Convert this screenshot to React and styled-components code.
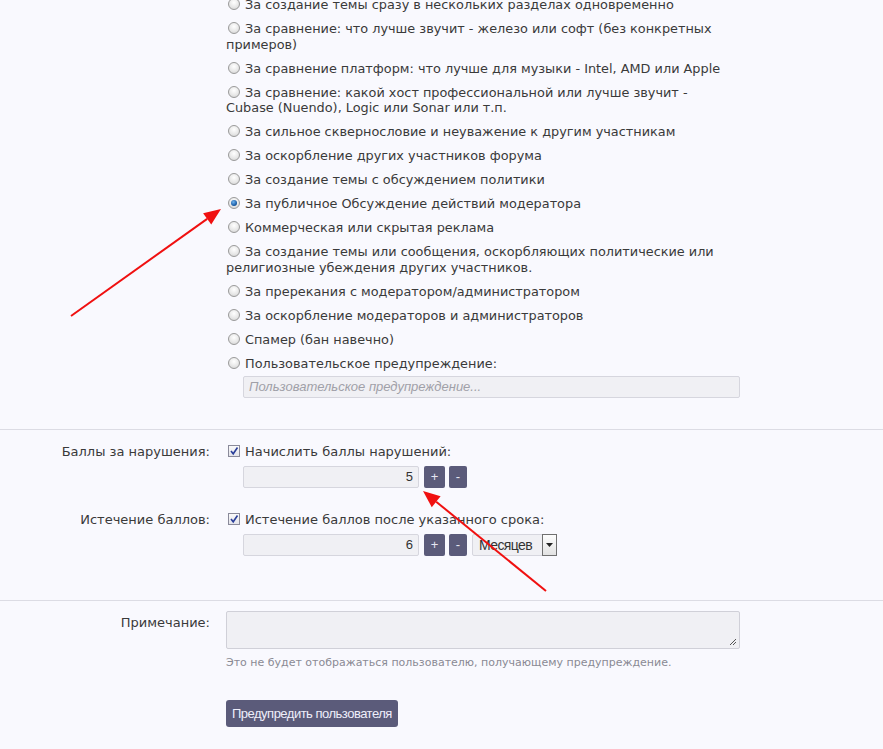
import React from 'react';
import styled, { createGlobalStyle } from 'styled-components';

const GlobalStyle = createGlobalStyle`
  html, body {
    margin: 0;
    padding: 0;
    background: #f9f9fe;
  }
  body {
    font-family: "DejaVu Sans", Verdana, sans-serif;
    font-size: 13px;
    color: #3a3a3a;
  }
`;

const Page = styled.div`
  position: relative;
  width: 883px;
  height: 749px;
  overflow: hidden;
`;

const Section = styled.div`
  padding: ${p => p.$pad || '0'};
  border-bottom: ${p => (p.$divider ? '1px solid #dcdce4' : 'none')};
`;

const Row = styled.div`
  display: grid;
  grid-template-columns: 210px 514px;
  column-gap: 16px;
  margin-bottom: ${p => p.$gap || '0'};
`;

const Label = styled.div`
  text-align: right;
  line-height: 16px;
  padding-top: ${p => p.$top || '0'};
  color: #3a3a3a;
`;

const Controls = styled.div`
  line-height: 16px;
`;

const OptionList = styled.div`
  margin-top: -3px;
`;

const Option = styled.div`
  max-width: 498px;
  font-size: 12.85px;
  line-height: 15.5px;
  margin-bottom: 8.5px;
`;

const Radio = styled.span`
  display: inline-block;
  box-sizing: border-box;
  width: 12px;
  height: 12px;
  margin: 0 5px 0 2px;
  vertical-align: -1px;
  border-radius: 50%;
  border: 1px solid #9a9a9a;
  background: radial-gradient(circle at 50% 35%, #ffffff 0%, #e8e8e8 55%, #cfcfcf 100%);
  position: relative;

  &::after {
    content: '';
    display: ${p => (p.$checked ? 'block' : 'none')};
    position: absolute;
    left: 2px;
    top: 2px;
    width: 6px;
    height: 6px;
    border-radius: 50%;
    background: radial-gradient(circle at 40% 35%, #6fb4f0 0%, #1c5fa8 60%, #0c3a70 100%);
  }
`;

const Checkbox = styled.span`
  display: inline-block;
  box-sizing: border-box;
  width: 12px;
  height: 12px;
  margin: 0 5px 0 2px;
  vertical-align: -1px;
  border: 1px solid #8a8a9a;
  background: linear-gradient(#fafafa, #e4e4ea);
  position: relative;

  svg {
    position: absolute;
    left: 0;
    top: 0;
  }
`;

const TextInput = styled.div`
  box-sizing: border-box;
  height: 22px;
  width: ${p => p.$width};
  margin-left: ${p => p.$indent || '0'};
  margin-top: ${p => p.$top || '0'};
  background: #f0f0f4;
  border: 1px solid #d6d6de;
  border-radius: 2px;
  padding: 0 5px;
  line-height: 20px;
  font-family: "Liberation Sans", Arial, sans-serif;
  font-size: 13px;
  font-style: ${p => (p.$placeholder ? 'italic' : 'normal')};
  color: ${p => (p.$placeholder ? '#a0a0a8' : '#333')};
  text-align: ${p => p.$align || 'left'};
`;

const SpinRow = styled.div`
  display: flex;
  align-items: center;
  margin-left: 17px;
  margin-top: 6px;
`;

const SpinButton = styled.div`
  box-sizing: border-box;
  width: ${p => p.$w};
  height: 22px;
  margin-left: ${p => p.$ml};
  background: #5b5b7a;
  border-radius: 2px;
  color: #e6e6f2;
  font-family: "Liberation Sans", Arial, sans-serif;
  font-size: 13px;
  line-height: 22px;
  text-align: center;
`;

const Select = styled.div`
  box-sizing: border-box;
  display: flex;
  align-items: stretch;
  width: 85px;
  height: 22px;
  margin-left: 5px;
  background: #f0f0f4;
  border: 1px solid #d6d6de;
  border-radius: 2px;
  font-family: "Liberation Sans", Arial, sans-serif;
  font-size: 14px;
  color: #333;
`;

const SelectText = styled.div`
  flex: 1;
  line-height: 20px;
  padding-left: 6px;
  letter-spacing: -0.6px;
`;

const SelectArrow = styled.div`
  width: 15px;
  box-sizing: border-box;
  border: 1px solid #707070;
  background: linear-gradient(#fdfdfd, #e2e2e2);
  display: flex;
  align-items: center;
  justify-content: center;
  margin: -1px -1px -1px 0;
`;

const TextArea = styled.div`
  box-sizing: border-box;
  height: 38px;
  width: 514px;
  background: #f0f0f4;
  border: 1px solid #d0d0d8;
  border-radius: 2px;
  position: relative;

  svg {
    position: absolute;
    right: 2px;
    bottom: 2px;
  }
`;

const Hint = styled.div`
  margin-top: 7px;
  font-family: "DejaVu Sans", Verdana, sans-serif;
  font-size: 11px;
  line-height: 14px;
  color: #8a8a94;
`;

const SubmitButton = styled.div`
  display: inline-block;
  margin-top: 30px;
  height: 27px;
  padding: 0 6px;
  background: #5b5b7a;
  border-radius: 3px;
  color: #eeeefa;
  font-family: "Liberation Sans", Arial, sans-serif;
  font-size: 13px;
  letter-spacing: -0.5px;
  line-height: 27px;
`;

const Overlay = styled.svg`
  position: absolute;
  left: 0;
  top: 0;
  pointer-events: none;
`;

const options = [
  'За создание темы сразу в нескольких разделах одновременно',
  'За сравнение: что лучше звучит - железо или софт (без конкретных примеров)',
  'За сравнение платформ: что лучше для музыки - Intel, AMD или Apple',
  'За сравнение: какой хост профессиональной или лучше звучит - Cubase (Nuendo), Logic или Sonar или т.п.',
  'За сильное сквернословие и неуважение к другим участникам',
  'За оскорбление других участников форума',
  'За создание темы с обсуждением политики',
  'За публичное Обсуждение действий модератора',
  'Коммерческая или скрытая реклама',
  'За создание темы или сообщения, оскорбляющих политические или религиозные убеждения других участников.',
  'За пререкания с модератором/администратором',
  'За оскорбление модераторов и администраторов',
  'Спамер (бан навечно)',
  'Пользовательское предупреждение:',
];

const Check = () => (
  <Checkbox>
    <svg width="10" height="10" viewBox="0 0 10 10">
      <path d="M2 5 L4.2 7.8 L8.5 1.5" fill="none" stroke="#2b3f9a" strokeWidth="1.6" />
    </svg>
  </Checkbox>
);

const Arrow = ({ x1, y1, x2, y2 }) => {
  const ang = Math.atan2(y2 - y1, x2 - x1);
  const len = 17;
  const w = 7;
  const bx = x2 - len * Math.cos(ang);
  const by = y2 - len * Math.sin(ang);
  const px = -Math.sin(ang) * w;
  const py = Math.cos(ang) * w;
  return (
    <g>
      <line x1={x1} y1={y1} x2={bx} y2={by} stroke="#f01010" strokeWidth="2" />
      <polygon
        points={`${x2},${y2} ${bx + px},${by + py} ${bx - px},${by - py}`}
        fill="#f01010"
      />
    </g>
  );
};

export default function App() {
  return (
    <Page>
      <GlobalStyle />
      <Section $divider $pad="0 0 31px 0">
        <Row>
          <Label />
          <Controls>
            <OptionList>
              {options.map((text, i) => (
                <Option key={i}>
                  <Radio $checked={i === 7} />
                  {text}
                </Option>
              ))}
            </OptionList>
            <TextInput $width="497px" $indent="17px" $top="-4px" $placeholder>
              Пользовательское предупреждение...
            </TextInput>
          </Controls>
        </Row>
      </Section>

      <Section $divider $pad="14px 0 44px 0">
        <Row $gap="24px">
          <Label>Баллы за нарушения:</Label>
          <Controls>
            <div><Check />Начислить баллы нарушений:</div>
            <SpinRow>
              <TextInput $width="176px" $align="right">5</TextInput>
              <SpinButton $w="21px" $ml="5px">+</SpinButton>
              <SpinButton $w="18px" $ml="4px">-</SpinButton>
            </SpinRow>
          </Controls>
        </Row>
        <Row>
          <Label>Истечение баллов:</Label>
          <Controls>
            <div><Check />Истечение баллов после указанного срока:</div>
            <SpinRow>
              <TextInput $width="176px" $align="right">6</TextInput>
              <SpinButton $w="21px" $ml="5px">+</SpinButton>
              <SpinButton $w="18px" $ml="4px">-</SpinButton>
              <Select>
                <SelectText>Месяцев</SelectText>
                <SelectArrow>
                  <svg width="7" height="4" viewBox="0 0 7 4">
                    <path d="M0 0 H7 L3.5 4 Z" fill="#222" />
                  </svg>
                </SelectArrow>
              </Select>
            </SpinRow>
          </Controls>
        </Row>
      </Section>

      <Section $pad="10px 0 0 0">
        <Row>
          <Label $top="4px">Примечание:</Label>
          <Controls>
            <TextArea>
              <svg width="8" height="8" viewBox="0 0 8 8">
                <path d="M1 7 L7 1 M4 7 L7 4" stroke="#555" strokeWidth="1" />
              </svg>
            </TextArea>
            <Hint>Это не будет отображаться пользователю, получающему предупреждение.</Hint>
            <SubmitButton>Предупредить пользователя</SubmitButton>
          </Controls>
        </Row>
      </Section>

      <Overlay width="883" height="749">
        <Arrow x1={71} y1={316} x2={221} y2={209} />
        <Arrow x1={546} y1={591} x2={423} y2={491} />
      </Overlay>
    </Page>
  );
}
